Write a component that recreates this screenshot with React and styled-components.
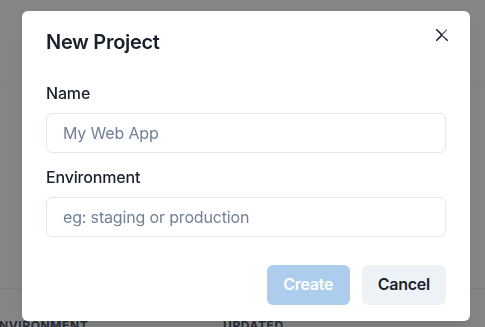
import React from "react";
import styled, { createGlobalStyle } from "styled-components";

const GlobalStyle = createGlobalStyle`
  html, body {
    margin: 0;
    padding: 0;
    height: 100%;
    overflow: hidden;
  }
  body {
    font-family: Inter, "Noto Sans", "Liberation Sans", sans-serif;
    background: #ffffff;
    color: #1a202c;
  }
  * {
    box-sizing: border-box;
  }
`;

/* page that sits behind the dimmed overlay */
const Page = styled.div`
  height: 327px;
  display: flex;
  flex-direction: column;
`;

const TopBar = styled.div`
  height: 83px;
  border-bottom: 1px solid #f2f4f8;
`;

const Content = styled.div`
  flex: 1;
`;

const TableHead = styled.div`
  height: 39px;
  border-top: 1px solid #eef0fb;
  display: grid;
  grid-template-columns: 223px 1fr;
  align-items: end;
  margin-left: -9px;
`;

const Th = styled.span`
  font-size: 12px;
  font-weight: 700;
  letter-spacing: 0.05em;
  text-transform: uppercase;
  color: #4a5568;
  line-height: 1;
  transform: translateY(5px);
  padding-left: ${({ offset }) => offset || 0}px;
`;

const Overlay = styled.div`
  position: fixed;
  inset: 0;
  background: rgba(0, 0, 0, 0.48);
  padding: 11px 0 0 22px;
`;

const Dialog = styled.section`
  position: relative;
  width: 448px;
  background: #ffffff;
  border-radius: 6px;
  box-shadow: 0 10px 15px -3px rgba(0, 0, 0, 0.1),
    0 4px 6px -2px rgba(0, 0, 0, 0.05);
  display: flex;
  flex-direction: column;
`;

const Header = styled.header`
  padding: 16px 24px;
  font-size: 20px;
  font-weight: 600;
  line-height: 30px;
  letter-spacing: -0.015em;
  color: #1a202c;
`;

const CloseButton = styled.button`
  position: absolute;
  top: 8px;
  right: 12px;
  width: 32px;
  height: 32px;
  border: 0;
  border-radius: 6px;
  background: transparent;
  display: flex;
  align-items: center;
  justify-content: center;
  padding: 0;
  color: #1a202c;
  cursor: pointer;
`;

const Body = styled.div`
  padding: 8px 24px 12px;
  display: flex;
  flex-direction: column;
  gap: 12px;
`;

const Field = styled.div`
  display: flex;
  flex-direction: column;
`;

const Label = styled.label`
  font-size: 16px;
  font-weight: 500;
  line-height: 24px;
  margin-bottom: 8px;
  letter-spacing: -0.01em;
  color: #1a202c;
`;

const Input = styled.input`
  height: 40px;
  width: 100%;
  border: 1px solid #e2e8f0;
  border-radius: 6px;
  padding: 0 16px;
  font-family: inherit;
  font-size: 16px;
  letter-spacing: -0.01em;
  color: #1a202c;
  background: #ffffff;
  outline: none;

  &::placeholder {
    color: #718096;
  }
`;

const Footer = styled.footer`
  padding: 16px 24px;
  display: flex;
  justify-content: flex-end;
  gap: 12px;
`;

const Button = styled.button`
  height: 40px;
  min-width: 83px;
  padding: 0 16px;
  border: 0;
  border-radius: 6px;
  font-family: inherit;
  font-size: 16px;
  font-weight: 600;
  line-height: 1.2;
  letter-spacing: -0.015em;
  background: ${({ primary }) => (primary ? "#3182ce" : "#edf2f7")};
  color: ${({ primary }) => (primary ? "#ffffff" : "#1a202c")};
  opacity: ${({ disabled }) => (disabled ? 0.4 : 1)};
  cursor: ${({ disabled }) => (disabled ? "not-allowed" : "pointer")};
`;

const CloseIcon = () => (
  <svg width="12" height="12" viewBox="0 0 24 24" fill="currentColor">
    <path d="M.439,21.44a1.5,1.5,0,0,0,2.122,2.121L11.823,14.3a.25.25,0,0,1,.354,0l9.262,9.263a1.5,1.5,0,1,0,2.122-2.121L12.3,12.177a.25.25,0,0,1,0-.354l9.263-9.262A1.5,1.5,0,0,0,21.439.44L12.177,9.7a.25.25,0,0,1-.354,0L2.561.44A1.5,1.5,0,0,0,.439,2.561L9.7,11.823a.25.25,0,0,1,0,.354Z" />
  </svg>
);

const App = () => (
  <>
    <GlobalStyle />
    <Page>
      <TopBar />
      <Content />
      <TableHead>
        <Th>Environment</Th>
        <Th offset={9}>Updated</Th>
      </TableHead>
    </Page>
    <Overlay>
      <Dialog role="dialog">
        <Header>New Project</Header>
        <CloseButton aria-label="Close">
          <CloseIcon />
        </CloseButton>
        <Body>
          <Field>
            <Label>Name</Label>
            <Input placeholder="My Web App" />
          </Field>
          <Field>
            <Label>Environment</Label>
            <Input placeholder="eg: staging or production" />
          </Field>
        </Body>
        <Footer>
          <Button primary disabled>
            Create
          </Button>
          <Button>Cancel</Button>
        </Footer>
      </Dialog>
    </Overlay>
  </>
);

export default App;
